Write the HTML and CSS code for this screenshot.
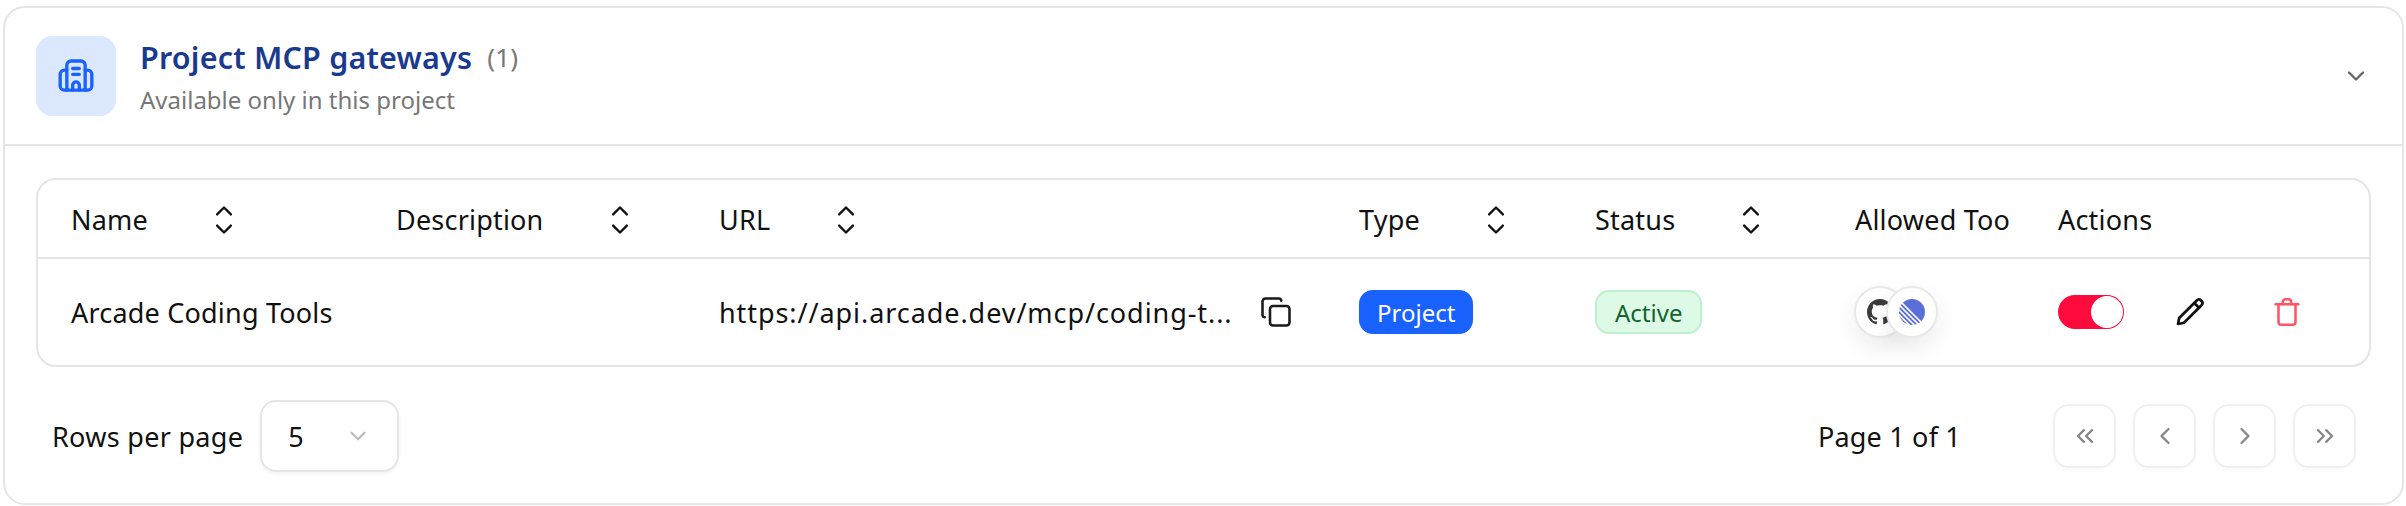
FILE: index.html
```html
<!DOCTYPE html>
<html lang="en">
<head>
    <meta charset="UTF-8">
    <meta name="viewport" content="width=device-width, initial-scale=1.0">
    <title>Project MCP gateways</title>
    <link rel="stylesheet" href="styles.css">
</head>
<body>
    <section class="card">
        <header class="card-header">
            <div class="header-icon">
                <svg width="40" height="40" viewBox="0 0 24 24" fill="none" stroke="#1a62ff" stroke-width="2" stroke-linecap="round" stroke-linejoin="round">
                    <path d="M6.5 20.5V5.5a2.5 2.5 0 0 1 2.5-2.5h6a2.5 2.5 0 0 1 2.5 2.5v15"/>
                    <path d="M6.5 8.5H5a2.5 2.5 0 0 0-2.5 2.5v7A2.5 2.5 0 0 0 5 20.5h14a2.5 2.5 0 0 0 2.5-2.5v-7A2.5 2.5 0 0 0 19 8.5h-1.500"/>
                    <path d="M10 7.500h4M10 11h4"/>
                    <path d="M10 20.500v-3a2 2 0 0 1 4 0v3"/>
                </svg>
            </div>
            <div class="header-text">
                <div class="title-line">
                    <h2 class="title">Project MCP gateways</h2>
                    <span class="count">(1)</span>
                </div>
                <p class="subtitle">Available only in this project</p>
            </div>
            <svg class="collapse" width="28" height="28" viewBox="0 0 24 24" fill="none" stroke="#666" stroke-width="2" stroke-linecap="round" stroke-linejoin="round"><path d="M6 9l6 6 6-6"/></svg>
        </header>

        <div class="card-body">
            <div class="table-wrap">
                <table class="gateways">
                    <colgroup>
                        <col class="col-name">
                        <col class="col-desc">
                        <col class="col-url">
                        <col class="col-type">
                        <col class="col-status">
                        <col class="col-tools">
                        <col class="col-actions">
                    </colgroup>
                    <thead>
                        <tr>
                            <th><div class="th-sort"><span>Name</span><svg width="30" height="30" viewBox="0 0 24 24" fill="none" stroke="#111" stroke-width="1.900" stroke-linecap="round" stroke-linejoin="round"><path d="M6.500 7.500L12 2l5.500 5.500M6.500 16.500L12 22l5.500-5.500"/></svg></div></th>
                            <th><div class="th-sort"><span>Description</span><svg width="30" height="30" viewBox="0 0 24 24" fill="none" stroke="#111" stroke-width="1.900" stroke-linecap="round" stroke-linejoin="round"><path d="M6.500 7.500L12 2l5.500 5.500M6.500 16.500L12 22l5.500-5.500"/></svg></div></th>
                            <th><div class="th-sort"><span>URL</span><svg width="30" height="30" viewBox="0 0 24 24" fill="none" stroke="#111" stroke-width="1.900" stroke-linecap="round" stroke-linejoin="round"><path d="M6.500 7.500L12 2l5.500 5.500M6.500 16.500L12 22l5.500-5.500"/></svg></div></th>
                            <th><div class="th-sort"><span>Type</span><svg width="30" height="30" viewBox="0 0 24 24" fill="none" stroke="#111" stroke-width="1.900" stroke-linecap="round" stroke-linejoin="round"><path d="M6.500 7.500L12 2l5.500 5.500M6.500 16.500L12 22l5.500-5.500"/></svg></div></th>
                            <th><div class="th-sort"><span>Status</span><svg width="30" height="30" viewBox="0 0 24 24" fill="none" stroke="#111" stroke-width="1.900" stroke-linecap="round" stroke-linejoin="round"><path d="M6.500 7.500L12 2l5.500 5.500M6.500 16.500L12 22l5.500-5.500"/></svg></div></th>
                            <th class="th-clip"><div class="clip">Allowed Tools</div></th>
                            <th>Actions</th>
                        </tr>
                    </thead>
                    <tbody>
                        <tr>
                            <td>Arcade Coding Tools</td>
                            <td></td>
                            <td>
                                <div class="url-cell">
                                    <span class="url">https://api.arcade.dev/mcp/coding-t...</span>
                                    <svg width="36" height="36" viewBox="0 0 24 24" fill="none" stroke="#1a1a1a" stroke-width="1.700" stroke-linecap="round" stroke-linejoin="round">
                                        <rect x="8" y="8" width="13" height="13" rx="2"/>
                                        <path d="M4.500 15.500 A1.500 1.500 0 0 1 3 14V5a2 2 0 0 1 2-2h9a1.500 1.500 0 0 1 1.500 1.500"/>
                                    </svg>
                                </div>
                            </td>
                            <td><span class="badge badge-project">Project</span></td>
                            <td><span class="badge badge-active">Active</span></td>
                            <td>
                                <div class="tool-stack">
                                    <span class="tool-avatar">
                                        <svg width="26" height="26" viewBox="0 0 16 16" fill="#3a3a3a"><path d="M8 0C3.58 0 0 3.58 0 8c0 3.540 2.290 6.530 5.470 7.590.4.070.55-.17.55-.38 0-.19-.01-.82-.01-1.490-2.010.37-2.530-.49-2.690-.94-.09-.23-.48-.94-.82-1.130-.28-.15-.68-.52-.01-.53.63-.01 1.080.58 1.230.82.72 1.210 1.870.87 2.330.66.07-.52.28-.87.51-1.070-1.780-.2-3.640-.89-3.640-3.950 0-.87.31-1.590.82-2.150-.08-.2-.36-1.020.08-2.120 0 0 .67-.21 2.200.82.64-.18 1.320-.27 2-.27.68 0 1.360.09 2 .27 1.530-1.040 2.200-.82 2.200-.82.44 1.100.16 1.920.08 2.120.51.56.82 1.270.82 2.150 0 3.070-1.870 3.750-3.650 3.950.29.25.54.73.54 1.480 0 1.070-.01 1.930-.01 2.200 0 .21.15.46.55.38A8.013 8.013 0 0 0 16 8c0-4.420-3.580-8-8-8z"/></svg>
                                    </span>
                                    <span class="tool-avatar">
                                        <svg width="26" height="26" viewBox="0 0 24 24">
                                            <circle cx="12" cy="12" r="12" fill="#5a70d8"/>
                                            <path d="M-2 -1 25 26M-2 3.500 20.500 26M-2 8 16 26M-2 12.500 11.500 26" stroke="#fff" stroke-width="1.500" fill="none"/>
                                        </svg>
                                    </span>
                                </div>
                            </td>
                            <td>
                                <div class="actions">
                                    <span class="toggle"><span class="knob"></span></span>
                                    <svg class="act-edit" width="36" height="36" viewBox="0 0 24 24" fill="none" stroke="#111" stroke-width="1.800" stroke-linecap="round" stroke-linejoin="round">
                                        <path d="M4 20l.8-4L16.500 4.300a2 2 0 0 1 2.800 0l.4.4a2 2 0 0 1 0 2.800L8 19.200z"/>
                                        <path d="M14.800 6l3.200 3.200"/>
                                    </svg>
                                    <svg class="act-delete" width="34" height="34" viewBox="0 0 24 24" fill="none" stroke="#ff5566" stroke-width="1.800" stroke-linecap="round" stroke-linejoin="round">
                                        <path d="M4 6.500h16"/>
                                        <path d="M6 6.500V19a2 2 0 0 0 2 2h8a2 2 0 0 0 2-2V6.500"/>
                                        <path d="M9 6.500V5a2 2 0 0 1 2-2h2a2 2 0 0 1 2 2v1.500"/>
                                    </svg>
                                </div>
                            </td>
                        </tr>
                    </tbody>
                </table>
            </div>

            <div class="pager">
                <div class="rows-per-page">
                    <span>Rows per page</span>
                    <div class="select">
                        <span>5</span>
                        <svg width="26" height="26" viewBox="0 0 24 24" fill="none" stroke="#bbb" stroke-width="2" stroke-linecap="round" stroke-linejoin="round"><path d="M6 9l6 6 6-6"/></svg>
                    </div>
                </div>
                <div class="page-nav">
                    <span class="page-label">Page 1 of 1</span>
                    <div class="page-buttons">
                        <button class="page-btn" disabled><svg width="28" height="28" viewBox="0 0 24 24" fill="none" stroke="#888" stroke-width="2" stroke-linecap="round" stroke-linejoin="round"><path d="M11 7l-5 5 5 5M18 7l-5 5 5 5"/></svg></button>
                        <button class="page-btn" disabled><svg width="28" height="28" viewBox="0 0 24 24" fill="none" stroke="#888" stroke-width="2" stroke-linecap="round" stroke-linejoin="round"><path d="M15 6l-6 6 6 6"/></svg></button>
                        <button class="page-btn" disabled><svg width="28" height="28" viewBox="0 0 24 24" fill="none" stroke="#888" stroke-width="2" stroke-linecap="round" stroke-linejoin="round"><path d="M9 6l6 6-6 6"/></svg></button>
                        <button class="page-btn" disabled><svg width="28" height="28" viewBox="0 0 24 24" fill="none" stroke="#888" stroke-width="2" stroke-linecap="round" stroke-linejoin="round"><path d="M6 7l5 5-5 5M13 7l5 5-5 5"/></svg></button>
                    </div>
                </div>
            </div>
        </div>
    </section>
</body>
</html>
```

FILE: styles.css
```css
* {
    box-sizing: border-box;
}
body {
    margin: 0;
    background-color: #fff;
    font-family: "Noto Sans", Arial, sans-serif;
    font-size: 27px;
    letter-spacing: 0.2px;
    color: #111;
}
.card {
    height: 499px;
    margin: 6px 2px 0 3px;
    border: 2px solid #e5e5e5;
    border-radius: 22px;
}
.card-header {
    display: flex;
    align-items: center;
    gap: 24px;
    height: 138px;
    padding: 0 32px 0 31px;
    border-bottom: 2px solid #e5e5e5;
}
.header-icon {
    display: flex;
    align-items: center;
    justify-content: center;
    width: 80px;
    height: 80px;
    border-radius: 16px;
    background-color: #dbe8fe;
}
.header-text {
    flex: 1;
}
.title-line {
    display: flex;
    align-items: center;
    gap: 15px;
}
.title {
    margin: 0;
    font-size: 30.5px;
    font-weight: 600;
    line-height: 40px;
    color: #1a3a8f;
}
.count {
    font-size: 26px;
    color: #777;
}
.subtitle {
    margin: 8px 0 0;
    font-size: 24px;
    line-height: 30px;
    letter-spacing: 0;
    color: #777;
}
.card-body {
    padding: 32px 31px 0;
}
.table-wrap {
    width: 2335px;
    height: 189px;
    border: 2px solid #e5e5e5;
    border-radius: 20px;
    overflow: hidden;
}
.gateways {
    width: 100%;
    table-layout: fixed;
    border-collapse: collapse;
}
.col-name { width: 325px; }
.col-desc { width: 323px; }
.col-url { width: 640px; }
.col-type { width: 236px; }
.col-status { width: 260px; }
.col-tools { width: 203px; }
th {
    height: 78px;
    padding: 2px 0 0 33px;
    border-bottom: 2px solid #e5e5e5;
    font-weight: 400;
    text-align: left;
}
td {
    height: 105px;
    padding: 2px 0 0 33px;
}
.th-sort {
    display: flex;
    align-items: center;
    gap: 61px;
}
.clip {
    width: 155px;
    overflow: hidden;
    white-space: nowrap;
}
.url-cell {
    display: flex;
    align-items: center;
    gap: 26px;
}
.url {
    white-space: nowrap;
    letter-spacing: 0.930px;
}
.badge {
    display: inline-flex;
    align-items: center;
    height: 44px;
    padding: 0 18px;
    border-radius: 14px;
    font-size: 24px;
    letter-spacing: 0;
}
.badge-project {
    background-color: #1a62ff;
    color: #fff;
}
.badge-active {
    border: 2px solid #bdf0cf;
    background-color: #dcfae6;
    color: #14622f;
}
.tool-stack {
    display: flex;
    margin-left: -1px;
}
.tool-avatar {
    display: flex;
    align-items: center;
    justify-content: center;
    width: 52px;
    height: 52px;
    margin-right: -20px;
    border: 2px solid #e8e8e8;
    border-radius: 50%;
    background-color: #fff;
    box-shadow: 0 10px 24px rgba(0, 0, 0, 0.08);
}
.actions {
    display: flex;
    align-items: center;
}
.toggle {
    display: flex;
    justify-content: flex-end;
    width: 66px;
    height: 34px;
    padding: 1px;
    border-radius: 17px;
    background-color: #ff0a3c;
}
.knob {
    width: 32px;
    height: 32px;
    border-radius: 50%;
    background-color: #fff;
}
.act-edit {
    margin-left: 48px;
}
.act-delete {
    margin-left: 62px;
}
.pager {
    display: flex;
    align-items: center;
    justify-content: space-between;
    height: 72px;
    margin-top: 33px;
    padding: 0 0 0 16px;
}
.rows-per-page {
    display: flex;
    align-items: center;
    gap: 17px;
    letter-spacing: 0.300px;
}
.select {
    display: flex;
    align-items: center;
    justify-content: space-between;
    width: 139px;
    height: 72px;
    padding: 0 26px;
    border: 2px solid #e5e5e5;
    border-radius: 16px;
    box-shadow: 0 2px 4px rgba(0, 0, 0, 0.05);
}
.page-nav {
    display: flex;
    align-items: center;
    gap: 92px;
    padding-right: 15px;
}
.page-buttons {
    display: flex;
    gap: 17px;
}
.page-btn {
    display: flex;
    align-items: center;
    justify-content: center;
    width: 63px;
    height: 64px;
    padding: 0;
    border: 2px solid #f0f0f0;
    border-radius: 16px;
    background-color: #fff;
    box-shadow: 0 2px 4px rgba(0, 0, 0, 0.03);
}
```
